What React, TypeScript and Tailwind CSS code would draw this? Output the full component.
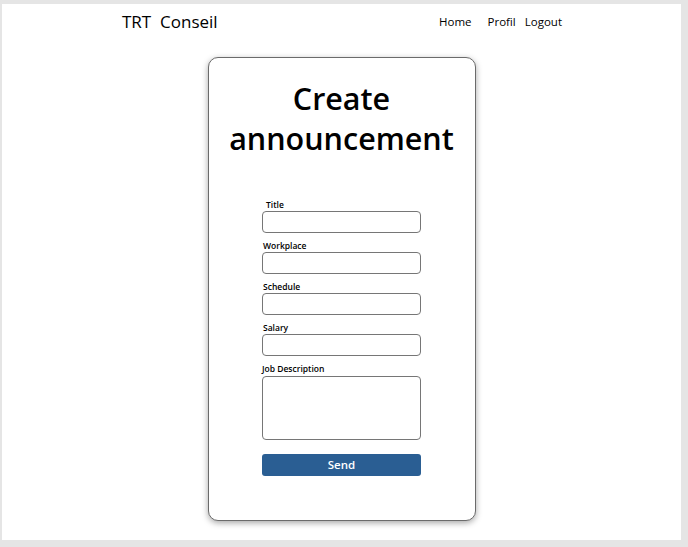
import React from 'react';

const fields = ['Title', 'Workplace', 'Schedule', 'Salary'];

const App: React.FC = () => {
  return (
    <div
      className="h-[547px] w-full bg-[#e5e5e5] pl-[2px] pt-[4px] pr-[7px] pb-[7px]"
      style={{ fontFamily: '"Open Sans", "Noto Sans", sans-serif' }}
    >
      <div className="h-full bg-white">
        <header className="flex h-[35px] items-center pl-[120px] pr-[119px] text-black">
          <div className="text-[17px] whitespace-pre">TRT  Conseil</div>
          <nav className="ml-auto flex items-center text-[11.5px]">
            <a className="mr-[16px]">Home</a>
            <a className="mr-[9px]">Profil</a>
            <a>Logout</a>
          </nav>
        </header>

        <div className="mx-auto mt-[18px] h-[464px] w-[268px] rounded-[10px] border border-[#6b6b6b] bg-white pt-[20px] shadow-[0_2px_6px_rgba(0,0,0,0.35)]">
          <h1 className="text-center text-[30.5px] leading-[40px] font-semibold text-black">
            Create
            <br />
            announcement
          </h1>

          <form className="mx-auto mt-[41px] flex w-[159px] flex-col" onSubmit={(e) => e.preventDefault()}>
            {fields.map((f) => (
              <div key={f} className="mb-[7px] flex flex-col">
                <label className={`h-[12px] text-[8.5px] leading-[12px] font-semibold text-black ${f === 'Title' ? 'pl-[4px]' : 'pl-[1px]'}`}>
                  {f}
                </label>
                <input className="h-[22px] w-full rounded-[4px] border border-[#767676] bg-white" />
              </div>
            ))}
            <div className="flex flex-col">
              <label className="h-[13px] text-[8.5px] leading-[12px] font-semibold text-black">Job Description</label>
              <textarea className="h-[64px] w-full resize-none rounded-[4px] border border-[#767676] bg-white" />
            </div>
            <button
              type="submit"
              className="mt-[14px] h-[22px] w-full rounded-[3px] bg-[#2a5e93] text-[11.5px] leading-[22px] font-semibold text-white"
            >
              Send
            </button>
          </form>
        </div>
      </div>
    </div>
  );
};

export default App;
